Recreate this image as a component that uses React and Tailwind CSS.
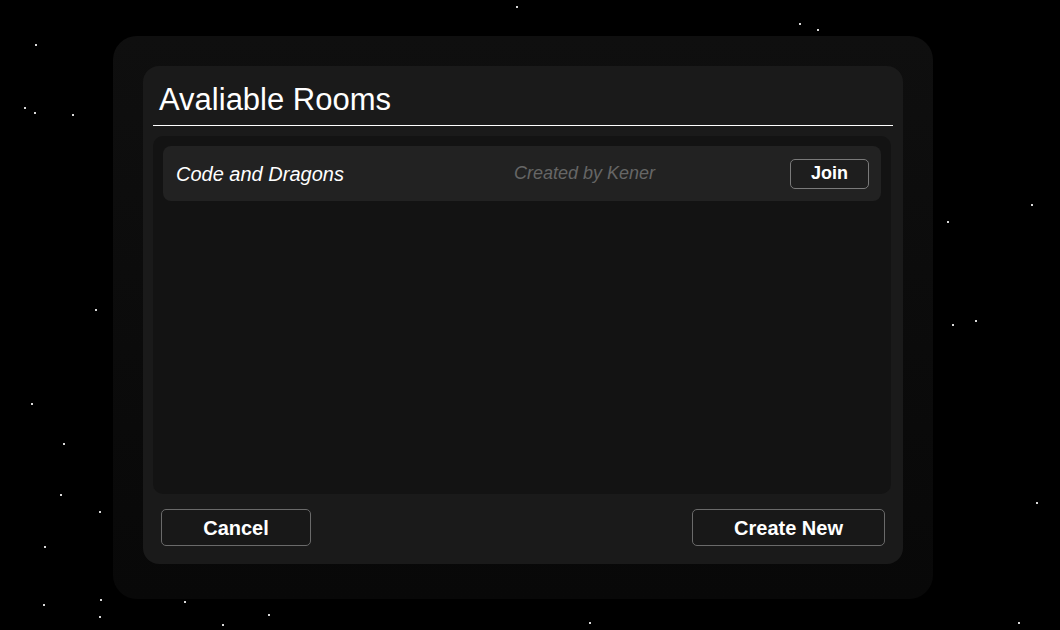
import React from "react";

const stars = [
  [516, 6], [35, 44], [509, 47], [480, 60], [24, 107], [34, 112], [72, 114], [95, 309],
  [799, 23], [817, 29], [926, 103], [1031, 204], [947, 221],
  [31, 403], [63, 443], [60, 494], [99, 511], [44, 546], [138, 412], [300, 586],
  [184, 601], [43, 604], [100, 599], [99, 616], [268, 614], [222, 624], [468, 567],
  [952, 324], [975, 320], [911, 493], [1036, 502], [571, 565], [901, 595], [589, 622], [1018, 622],
];

export default function App() {
  return (
    <div className="relative w-[1060px] h-[630px] overflow-hidden bg-black font-['Liberation_Sans',Arial,sans-serif]">
      <div className="absolute inset-0">
        {stars.map(([x, y], i) => (
          <div
            key={i}
            className="absolute w-[2px] h-[2px] bg-[#d8d8d8]"
            style={{ left: x, top: y }}
          />
        ))}
      </div>

      <div className="relative ml-[113px] mt-[36px] w-[820px] h-[563px] rounded-[24px] bg-gradient-to-b from-[#0f0f0f] to-[#080808] p-[30px]">
        <div className="flex flex-col w-[760px] h-[498px] rounded-[16px] bg-[#1a1a1a] px-[10px]">
          <div className="h-[59px] pt-[18px] pl-[6px]">
            <h1 className="text-[31px] leading-[31px] text-white">Avaliable Rooms</h1>
          </div>
          <div className="h-px bg-white" />
          <div className="mt-[10px] mr-[2px] h-[358px] rounded-[10px] bg-[#131313] p-[10px]">
            <div className="flex items-center h-[55px] rounded-[8px] bg-[#222222] pl-[13px] pr-[12px]">
              <div className="w-[338px] text-[20px] italic text-white">Code and Dragons</div>
              <div className="text-[18px] italic text-[#666666]">Created by Kener</div>
              <button className="ml-auto w-[79px] h-[30px] rounded-[5px] border border-[#7a7a7a] bg-[#1e1e1e] text-[18px] font-bold text-white">
                Join
              </button>
            </div>
          </div>
          <div className="flex justify-between mt-[15px] px-[8px]">
            <button className="w-[150px] h-[37px] rounded-[5px] border border-[#6a6a6a] bg-[#181818] text-[20px] font-bold text-white">
              Cancel
            </button>
            <button className="w-[193px] h-[37px] rounded-[5px] border border-[#6a6a6a] bg-[#181818] text-[20px] font-bold text-white">
              Create New
            </button>
          </div>
        </div>
      </div>
    </div>
  );
}
